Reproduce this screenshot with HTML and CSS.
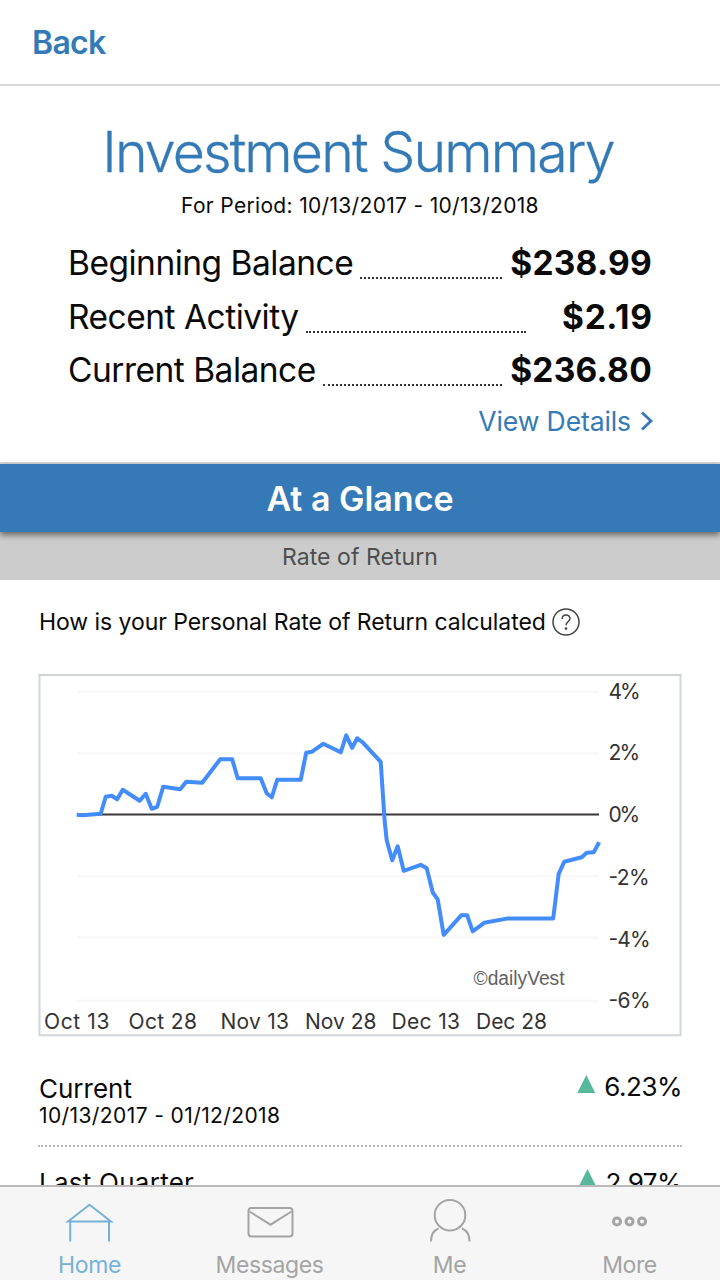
FILE: index.html
```html
<!DOCTYPE html>
<html lang="en">
<head>
<meta charset="utf-8">
<title>Investment Summary</title>
<link rel="stylesheet" href="styles.css">
</head>
<body>
<div class="app">
  <header class="topbar"><a class="back">Back</a></header>
  <main class="content">
    <section class="summary">
      <h1 class="title">Investment Summary</h1>
      <p class="period">For Period: 10/13/2017 - 10/13/2018</p>
      <div class="balances">
        <div class="row"><span class="label">Beginning Balance</span><span class="leader"></span><span class="amount">$238.99</span></div>
        <div class="row"><span class="label">Recent Activity</span><span class="leader"></span><span class="amount amount-short">$2.19</span></div>
        <div class="row"><span class="label">Current Balance</span><span class="leader"></span><span class="amount">$236.80</span></div>
      </div>
      <a class="details"><span>View Details</span>
        <svg class="chevron" width="13" height="22" viewBox="0 0 13 22"><path d="M2 2.500 L11 11 L2 19.500"/></svg>
      </a>
    </section>
    <h2 class="glance"><span>At a Glance</span></h2>
    <div class="subhead"><span>Rate of Return</span></div>
    <section class="returns">
      <p class="question"><span>How is your Personal Rate of Return calculated</span>
        <svg class="help" width="28" height="28" viewBox="0 0 28 28"><circle cx="14" cy="14" r="13"/><path d="M10.200 11 C10.200 5.800 18 5.800 18 10.600 C18 13.600 14 13.600 14 17.300"/><circle class="help-dot" cx="14" cy="20.600" r="1.300"/></svg>
      </p>
      <svg class="chart" width="643" height="363" viewBox="0 0 643 363">
        <rect class="frame" x="1.500" y="1" width="641" height="360.300"/>
        <path class="grid" d="M39 17.800H561M39 79.300H561M39 202.300H561M39 263.500H561M39 326.700H561"/>
        <path class="zero" d="M39 140.600H561"/>
        <g transform="translate(0.7 -0.7)"><path class="series" d="M38 141.500 L44 142 L62 140.500 L67 123.500 L73 122.500 L78.500 126 L84 116.500 L101 127.500 L107 120.500 L113 135.500 L118.500 133.500 L124.500 113.500 L141.500 116 L147.500 108.500 L163.500 109.500 L181.500 86 L193.500 86 L199 105 L222 105 L228 120 L233 124 L238.500 106.500 L262 106.500 L267.500 79.500 L273 78.500 L284.500 70.500 L302 79 L307.500 62 L313.500 74.500 L318.500 65 L324 69 L342 88.500 L346 148 L348 167 L353.500 187 L359 173 L365 197.500 L382 191.500 L388 195 L394 219 L399 226 L405 261.500 L422.500 242 L428.500 242 L434 258 L445.500 249.500 L468 245.300 L514.500 245.300 L520 200.500 L525.500 188.500 L543 184 L548 179.500 L555 179 L560.500 169"/></g>
        <g class="scale"><text x="570.500" y="24.700" textLength="32">4%</text><text x="570.500" y="86" textLength="31.500">2%</text><text x="570.500" y="147.500" textLength="31.500">0%</text><text x="570.500" y="210.500" textLength="41">-2%</text><text x="570.500" y="272.500" textLength="42">-4%</text><text x="570.500" y="333.500" textLength="42">-6%</text>
        <text x="6" y="354.500" textLength="65.500">Oct 13</text><text x="90.500" y="354.500" textLength="68.500">Oct 28</text><text x="182.500" y="354.500" textLength="68.500">Nov 13</text><text x="267" y="354.500" textLength="71.500">Nov 28</text><text x="353.500" y="354.500" textLength="68.500">Dec 13</text><text x="438" y="354.500" textLength="71">Dec 28</text></g>
        <text class="credit" x="435.500" y="310.500" textLength="91" lengthAdjust="spacingAndGlyphs">©dailyVest</text>
      </svg>
      <div class="result">
        <div class="result-main"><span class="result-name">Current</span><span class="result-dates">10/13/2017 - 01/12/2018</span></div>
        <div class="result-value"><span class="up"></span><span class="percent">6.23%</span></div>
      </div>
      <div class="result result-next">
        <div class="result-main"><span class="result-name quarter">Last Quarter</span></div>
        <div class="result-value"><span class="up"></span><span class="percent">2.97%</span></div>
      </div>
    </section>
  </main>
  <nav class="tabs">
    <a class="tab active"><svg width="50" height="44" viewBox="0 0 50 44"><path d="M3 19.500 L24.500 2.800 L46 19.500 Z M5.200 20V39.500 M44 20V39.500"/></svg><span>Home</span></a>
    <a class="tab"><svg width="50" height="44" viewBox="0 0 50 44"><rect x="3.500" y="6" width="44" height="28.500" rx="3"/><path d="M4.500 9.500 L25.500 22.700 L46.500 9.500"/></svg><span>Messages</span></a>
    <a class="tab"><svg width="50" height="44" viewBox="0 0 50 44"><circle cx="25" cy="13.200" r="15.300"/><path d="M13.500 26.500 C8.500 28.500 6 33 6 39.500 M37 26.500 C42 28.500 44.500 33 44.500 39.500"/></svg><span>Me</span></a>
    <a class="tab"><svg class="dots" width="50" height="44" viewBox="0 0 50 44"><circle cx="12" cy="19.500" r="3.500"/><circle cx="24.500" cy="19.500" r="3.500"/><circle cx="37" cy="19.500" r="3.500"/></svg><span>More</span></a>
  </nav>
</div>
</body>
</html>
```
FILE: styles.css
```css
* { box-sizing: border-box; }
body { margin: 0; background: #fff; color: #0a0a0a; font-family: Inter, "Liberation Sans", sans-serif; }
h1, h2, p { margin: 0; font-weight: 400; }
svg { display: block; flex: none; overflow: visible; }
.app { width: 720px; height: 1280px; display: flex; flex-direction: column; overflow: hidden; }
.topbar { height: 86px; flex: none; border-bottom: 2px solid #d8d8d8; padding: 23px 32px 0; }
.back { color: #337ab7; font-size: 32px; line-height: 40px; font-weight: 600; letter-spacing: -0.7px; }
.content { flex: 1; min-height: 0; overflow: hidden; }
.summary { height: 378px; display: flex; flex-direction: column; border-bottom: 2px solid #d3d5d7; }
.title { margin-top: 32px; padding-right: 4px; text-align: center; color: #337ab7; font-size: 55.5px; line-height: 67px; font-weight: 300; letter-spacing: -1.9px; -webkit-text-stroke: .3px #337ab7; white-space: nowrap; }
.period { margin-top: 7px; text-align: center; font-size: 21px; line-height: 28px; letter-spacing: 0.32px; }
.balances { padding: 16px 68px 0; }
.row { display: flex; height: 53.5px; line-height: 54px; font-size: 33.5px; white-space: nowrap; }
.label { letter-spacing: -0.5px; }
.leader { flex: 1; height: 43px; margin: 0 8px 0 7px; border-bottom: 2px dotted #333; }
.amount { font-weight: 700; letter-spacing: 0.25px; }
.amount-short { margin-left: 28px; letter-spacing: .6px; margin-right: -.5px; }
.details { display: flex; align-items: center; justify-content: flex-end; gap: 9px; height: 36px; padding-right: 67px; margin-top: 6px; color: #337ab7; font-size: 26.5px; letter-spacing: -0.1px; }
.chevron { fill: none; stroke: #337ab7; stroke-width: 2.8; }
.glance { position: relative; height: 68px; background: #357ab7; box-shadow: 0 3px 6px rgba(0,0,0,.5); color: #fff; text-align: center; font-size: 34px; line-height: 70px; font-weight: 600; }
.subhead { height: 48px; background: #ccc; color: #4e4e4e; text-align: center; font-size: 23px; line-height: 50px; letter-spacing: .05px; }
.returns { padding: 23px 38px 0; }
.question { display: flex; align-items: center; gap: 6px; height: 38px; padding-left: 1px; font-size: 23px; line-height: 38px; letter-spacing: -.06px; white-space: nowrap; }
.help { fill: none; stroke: #444; stroke-width: 1.5; }
.help .help-dot { fill: #444; stroke: none; }
.chart { margin-top: 33px; }
.frame { fill: none; stroke: #cfd5d9; stroke-width: 2; }
.grid { fill: none; stroke: #f7f7f8; stroke-width: 2; }
.zero { stroke: #3a3639; stroke-width: 2; }
.series { fill: none; stroke: #428cfb; stroke-width: 4; stroke-linejoin: round; }
.scale { fill: #333; font-size: 21px; }
.credit { fill: #626262; font-family: "Liberation Sans", sans-serif; font-size: 19.5px; }
.result { display: flex; justify-content: space-between; height: 110px; padding: 35px 0 0 1px; border-bottom: 2px dotted #bbb; }
.result-main { display: flex; flex-direction: column; }
.result-name { font-size: 26px; line-height: 33px; }
.quarter { letter-spacing: .25px; }
.result-dates { font-size: 21px; line-height: 22px; letter-spacing: .4px; }
.result-value { display: flex; gap: 9px; }
.up { width: 18px; height: 18px; margin-top: 3px; background: #57b89c; clip-path: polygon(50% 0, 100% 100%, 0 100%); }
.percent { font-size: 26px; line-height: 30px; letter-spacing: -.5px; }
.result-next { padding-top: 19px; border: 0; }
.result-next .percent { line-height: 33px; }
.tabs { height: 95px; flex: none; display: grid; grid-template-columns: repeat(4, 1fr); background: #f6f6f6; border-top: 2px solid #b9b9bb; }
.tab { display: flex; flex-direction: column; align-items: center; padding: 15px 1px 0 0; gap: 5px; color: #a4a4a4; font-size: 23px; line-height: 28px; letter-spacing: -.4px; }
.tab svg { fill: none; stroke: currentColor; stroke-width: 2; }
.tab .dots { stroke-width: 3; }
.active { color: #78b1d8; }
```
